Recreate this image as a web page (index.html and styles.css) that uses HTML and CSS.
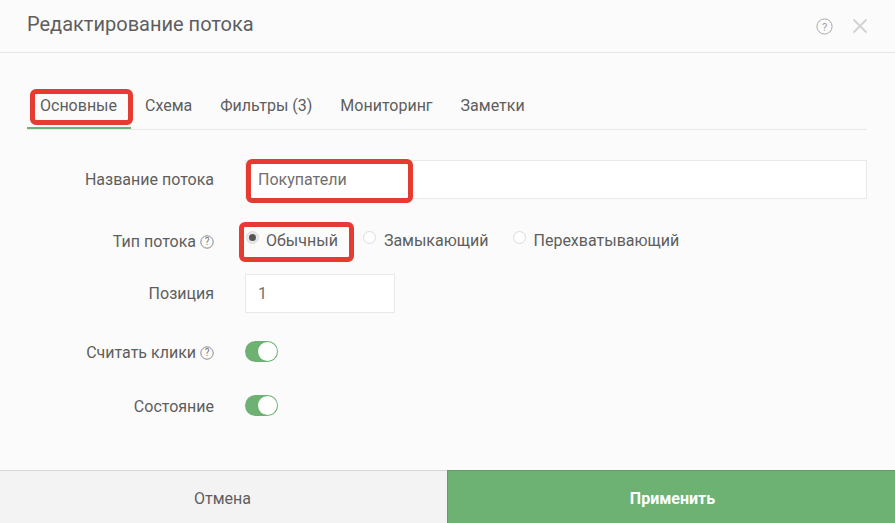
FILE: index.html
```html
<!DOCTYPE html>
<html lang="ru">
<head>
<meta charset="utf-8">
<title>Редактирование потока</title>
<link rel="stylesheet" href="styles.css">
</head>
<body>
<div class="dialog">
  <header class="head">
    <h1 class="title">Редактирование потока</h1>
    <div class="head-icons">
      <svg class="help-lg" width="17" height="17" viewBox="0 0 17 17"><circle cx="8.5" cy="8.5" r="7.6" fill="none" stroke="#a8a8a8" stroke-width="1"/><text x="8.5" y="12.5" text-anchor="middle" class="q-lg">?</text></svg>
      <svg width="16" height="16" viewBox="0 0 16 16"><path d="M1.5 1.5 14.5 14.5M14.5 1.5 1.5 14.5" stroke="#d2d2d2" stroke-width="1.8" fill="none"/></svg>
    </div>
  </header>
  <main class="body">
    <nav class="tabs">
      <a class="tab active">Основные</a>
      <a class="tab">Схема</a>
      <a class="tab">Фильтры (3)</a>
      <a class="tab">Мониторинг</a>
      <a class="tab">Заметки</a>
    </nav>
    <div class="form">
      <div class="row row-name">
        <div class="label">Название потока</div>
        <div class="input wide">Покупатели</div>
      </div>
      <div class="row row-type">
        <div class="label">Тип потока <svg class="help" width="14" height="14" viewBox="0 0 14 14"><circle cx="7" cy="7" r="6.2" fill="none" stroke="#8a8a8a" stroke-width="1"/><text x="7" y="10.3" text-anchor="middle" class="q">?</text></svg></div>
        <div class="radios">
          <span class="radio checked"><i class="dot"></i>Обычный</span>
          <span class="radio"><i class="dot"></i>Замыкающий</span>
          <span class="radio"><i class="dot"></i>Перехватывающий</span>
        </div>
      </div>
      <div class="row row-pos">
        <div class="label">Позиция</div>
        <div class="input narrow">1</div>
      </div>
      <div class="row row-clicks">
        <div class="label">Считать клики <svg class="help" width="14" height="14" viewBox="0 0 14 14"><circle cx="7" cy="7" r="6.2" fill="none" stroke="#8a8a8a" stroke-width="1"/><text x="7" y="10.3" text-anchor="middle" class="q">?</text></svg></div>
        <div class="toggle"></div>
      </div>
      <div class="row row-state">
        <div class="label">Состояние</div>
        <div class="toggle"></div>
      </div>
    </div>
  </main>
  <footer class="foot">
    <button class="btn cancel">Отмена</button>
    <button class="btn apply">Применить</button>
  </footer>
  <div class="mark mark-tab"></div>
  <div class="mark mark-input"></div>
  <div class="mark mark-radio"></div>
</div>
</body>
</html>
```
FILE: styles.css
```css
* { box-sizing: border-box; }
html, body { margin: 0; height: 100%; }
body { font-family: Roboto, "Liberation Sans", sans-serif; color: #5e5e5e; background: #fbfbfb; overflow: hidden; }
.dialog { position: relative; width: 895px; height: 523px; display: flex; flex-direction: column; background: #fbfbfb; }
.head { height: 53px; flex: none; display: flex; align-items: center; justify-content: space-between; padding: 0 27px; border-bottom: 1px solid #e6e6e4; }
.title { margin: 0; font-size: 20px; font-weight: 400; color: #5e5e5e; position: relative; top: -2px; }
.head-icons { display: flex; align-items: center; gap: 19px; }
.q-lg { font: 400 11px Roboto, sans-serif; fill: #a0a0a0; }
.q { font: 400 10px Roboto, sans-serif; fill: #777; }
.body { flex: 1; padding: 0 28px 0 27px; }
.tabs { display: flex; gap: 28px; height: 77px; padding: 36px 0 0 13px; border-bottom: 1px solid #e8e8e6; font-size: 16px; }
.tab { display: block; height: 40px; line-height: 33px; color: #5e5e5e; position: relative; }
.tab.active::after { content: ""; position: absolute; left: -13px; right: -14px; bottom: 0; height: 2px; background: #6db273; }
.form { padding-top: 29px; }
.row { display: grid; grid-template-columns: 187px 1fr; column-gap: 31px; align-items: center; font-size: 16px; }
.row-name { height: 40px; margin-bottom: 32px; }
.row-type { height: 20px; margin-bottom: 22px; }
.row-pos { height: 40px; margin-bottom: 27px; }
.row-clicks { height: 22px; margin-bottom: 32px; }
.row-state { height: 22px; }
.row-clicks .label, .row-state .label { padding-top: 2px; }
.label { text-align: right; white-space: nowrap; }
.help { vertical-align: -2px; }
.input { height: 39px; background: #fff; border: 1px solid #e9e9e7; line-height: 37px; padding-left: 12px; color: #707070; }
.wide { width: 622px; }
.narrow { width: 150px; }
.radios { display: flex; margin-left: 1px; }
.radio { display: flex; align-items: center; height: 20px; margin-right: 24px; line-height: 20px; }
.radio.checked { margin-right: 25px; }
.dot { position: relative; top: -4px; width: 13px; height: 13px; margin-right: 8px; border-radius: 50%; background: #fff; border: 1px solid #dcdcdc; flex: none; }
.checked .dot { margin-right: 7px; background: #e8e8e8; }
.checked .dot::after { content: ""; position: absolute; left: 2px; top: 2px; width: 7px; height: 7px; border-radius: 50%; background: #555; }
.toggle { position: relative; width: 33px; height: 21px; border-radius: 11px; background: #6db273; }
.toggle::after { content: ""; position: absolute; right: 1px; top: 1px; width: 19px; height: 19px; border-radius: 50%; background: #fff; }
.foot { flex: none; height: 53px; display: flex; }
.btn { border: 0; margin: 0; padding: 2px 0 0; font: 400 16px Roboto, sans-serif; height: 53px; }
.cancel { width: 447px; padding-right: 2px; background: #f3f3f3; border-top: 1px solid #d8d8d8; color: #5e5e5e; }
.apply { flex: 1; padding-left: 2px; background: #6db273; border-top: 1px solid #609e66; border-left: 1px solid #609e66; color: #fff; font-weight: 700; }
.mark { position: absolute; border: 5px solid #e53b30; border-radius: 6px; pointer-events: none; }
.mark-tab { left: 30px; top: 89px; width: 103px; height: 36px; }
.mark-input { left: 246px; top: 159px; width: 167px; height: 44px; }
.mark-radio { left: 239px; top: 222px; width: 115px; height: 40px; }
```
